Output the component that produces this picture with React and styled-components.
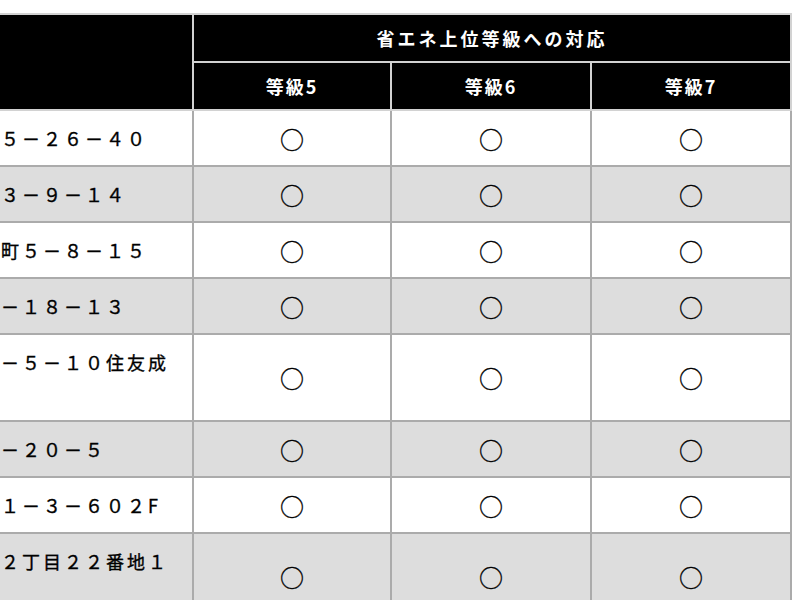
import React from "react";
import styled, { createGlobalStyle } from "styled-components";

const GlobalStyle = createGlobalStyle`
  html, body {
    margin: 0;
    padding: 0;
    background: #ffffff;
    overflow: hidden;
  }
  body {
    font-family: "Noto Sans CJK JP", "Noto Sans", sans-serif;
  }
`;

const Page = styled.div`
  padding-top: 13px;
  width: 799px;
  overflow: hidden;
`;

// the table is wider than the window; its left part runs off screen
const Table = styled.table`
  margin-left: -200px;
  width: 990px;
  table-layout: fixed;
  border-collapse: collapse;
  border: 2px solid #ababab;
  font-size: 18px;
  letter-spacing: 3px;
`;

const HeadCell = styled.th`
  background: #000000;
  color: #ffffff;
  font-weight: 700;
  font-size: 18px;
  height: 46px;
  padding: 0;
  border: 2px solid #d2d2d2;
  text-align: ${(p) => (p.$left ? "left" : "center")};
  padding-left: ${(p) => (p.$left ? "10px" : "0")};
  letter-spacing: ${(p) => (p.$tight ? "2px" : "3px")};
`;

const Row = styled.tr`
  background: ${(p) => (p.$shade ? "#dddddd" : "#ffffff")};
`;

const AddressCell = styled.td`
  padding: 11.5px 10px;
  line-height: 31px;
  color: #000000;
  font-weight: 400;
  -webkit-text-stroke: 0.35px #000000;
  border: 2px solid #ababab;
  vertical-align: middle;
  text-align: left;
`;

const MarkCell = styled.td`
  padding: 0;
  border: 2px solid #ababab;
  text-align: center;
  vertical-align: middle;
  color: #000000;
  font-size: 24px;
  letter-spacing: 0;
  line-height: 31px;
  -webkit-text-stroke: 0.3px #000000;
`;

const offices = [
  "東京都品川区東大井５－２６－４０",
  "名古屋市中区丸の内３－９－１４",
  "横浜市神奈川区鶴屋町５－８－１５",
  "福岡市博多区住吉２－１８－１３",
  "東京都板橋区成増２－５－１０住友成増ビル５階",
  "大阪市淀川区宮原４－２０－５",
  "仙台市青葉区一番町１－３－６０２F",
  "札幌市中央区大通西２丁目２２番地１大通ビル",
];

const grades = ["等級5", "等級6", "等級7"];

const App = () => {
  return (
    <Page>
      <GlobalStyle />
      <Table>
        <colgroup>
          <col style={{ width: 392 }} />
          <col style={{ width: 198 }} />
          <col style={{ width: 200 }} />
          <col style={{ width: 200 }} />
        </colgroup>
        <thead>
          <tr>
            <HeadCell rowSpan={2} $left>
              所在地
            </HeadCell>
            <HeadCell colSpan={3}>省エネ上位等級への対応</HeadCell>
          </tr>
          <tr>
            {grades.map((g) => (
              <HeadCell key={g} $tight>
                {g}
              </HeadCell>
            ))}
          </tr>
        </thead>
        <tbody>
          {offices.map((addr, i) => (
            <Row key={addr} $shade={i % 2 === 1}>
              <AddressCell>{addr}</AddressCell>
              {grades.map((g) => (
                <MarkCell key={g}>○</MarkCell>
              ))}
            </Row>
          ))}
        </tbody>
      </Table>
    </Page>
  );
};

export default App;
